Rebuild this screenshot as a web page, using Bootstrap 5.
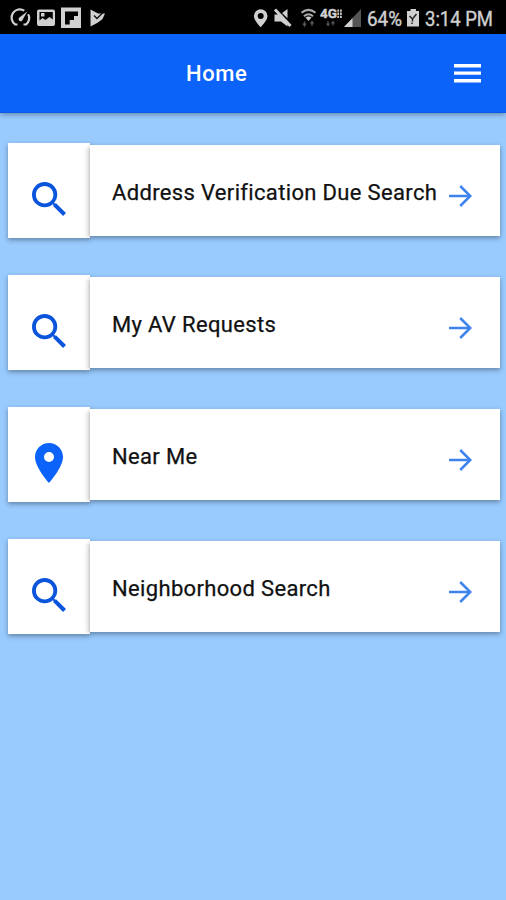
<!DOCTYPE html>
<html lang="en">
<head>
<meta charset="utf-8">
<meta name="viewport" content="width=device-width, initial-scale=1">
<title>Home</title>
<link href="https://cdn.jsdelivr.net/npm/bootstrap@5.3.0/dist/css/bootstrap.min.css" rel="stylesheet">
<style>
body{background:#99cbff;font-family:Roboto,"Liberation Sans",sans-serif;min-height:900px}
svg{display:block;flex:none;overflow:visible}
.status-bar{height:34px;background:#000;color:#d0d0d0;padding:0 11px}
.status-bar text{fill:#d0d0d0;stroke:#d0d0d0;stroke-width:.4px;font-family:Roboto,sans-serif}
.app-bar{height:79px;background:#0b63fa;border-bottom:1px solid #0a58e6;box-shadow:0 1px 6px rgba(0,0,0,.4);padding:1px 25px 0 186px}
.app-title{font-size:22px;font-weight:500;line-height:30px;letter-spacing:.55px;padding-top:1px}
.menu-list{padding:29.5px 6px 0 7.5px;gap:36px}
.menu-row{height:96px;color:#111}
.tile{width:82px;height:95px;margin-top:-1px;background:#fff;box-shadow:0 2px 5px rgba(0,0,0,.36);padding-top:18px}
.bar{height:91px;background:#fff;box-shadow:0 2px 5px rgba(0,0,0,.36);padding:6px 28px 0 22.5px}
.row-label{font-size:22px;line-height:30px;letter-spacing:.34px;font-weight:400;-webkit-text-stroke:.25px #111;margin-top:-1px}
.tile-shade{width:8px;height:88px;margin:2px 0 0 -8px;background:linear-gradient(90deg,transparent,rgba(0,0,0,.04))}
</style>
<script src="https://cdn.jsdelivr.net/npm/bootstrap@5.3.0/dist/js/bootstrap.bundle.min.js"></script>
</head>
<body>
<svg width="0" height="0" class="position-absolute" aria-hidden="true">
  <symbol id="search" viewBox="3 3 17.49 17.49"><path d="M15.5 14h-.79l-.28-.27A6.47 6.47 0 0 0 16 9.5 6.5 6.5 0 1 0 9.5 16c1.61 0 3.09-.59 4.23-1.57l.27.28v.79l5 4.99L20.49 19l-4.99-5zm-6 0C7.01 14 5 11.99 5 9.5S7.01 5 9.5 5 14 7.01 14 9.5 11.99 14 9.5 14z"/></symbol>
  <symbol id="place" viewBox="5 2 14 20"><path d="M12 2C8.13 2 5 5.13 5 9c0 5.25 7 13 7 13s7-7.75 7-13c0-3.87-3.13-7-7-7zm0 9.5a2.5 2.5 0 0 1 0-5 2.5 2.5 0 0 1 0 5z"/></symbol>
  <symbol id="arrow" viewBox="0 0 24 24"><path d="M1 12H22M12.200 2L22.300 12L12.200 22" fill="none" stroke="#3f83ee" stroke-width="2.500"/></symbol>
</svg>

<div class="status-bar d-flex align-items-start justify-content-between">
  <svg width="94" height="34" viewBox="11 0 94 34" fill="#d0d0d0">
    <path d="M17.500 24.500H15.300A8 8 0 0 1 24.300 10.700M28.200 14.200A8 8 0 0 1 26 24.500H23.500" fill="none" stroke="#d0d0d0" stroke-width="2.200"/>
    <path d="M27.300 11.500L22.200 20.400A2 2 0 1 1 19 17.800z"/>
    <path fill-rule="evenodd" d="M39 9.500H53A2 2 0 0 1 55 11.500V24A2 2 0 0 1 53 26H39A2 2 0 0 1 37 24V11.500A2 2 0 0 1 39 9.500zM39.500 12V20.500L42.500 18L45.500 20L49.500 17L52.800 19.500V12zM41 13H44.500V16.500H41z"/>
    <path fill-rule="evenodd" d="M61 7.500H81V28H61zM65 11.500V24.500H69.700V20H74V16H78V11.500z"/>
    <path d="M90.500 9.500L98 13.500H105L102.500 19L98 22.500L90.500 26.500z"/>
    <path d="M94 15.500L97 18.500L103 12.500" fill="none" stroke="#111" stroke-width="1.400"/>
  </svg>
  <svg width="242" height="34" viewBox="253 0 242 34" fill="#d0d0d0">
    <path fill-rule="evenodd" d="M260.700 9.200A6.800 6.800 0 0 0 253.900 16C253.900 20.500 260.700 27.200 260.700 27.200S267.500 20.500 267.500 16A6.800 6.800 0 0 0 260.700 9.200zM260.700 13A3 3 0 1 1 260.700 19A3 3 0 1 1 260.700 13z"/>
    <path d="M274.500 14.500H279L287.500 22V26.500L281 21.500H274.500zM281.500 13.500L287.500 9V18.500z"/>
    <path d="M275 9.500L290.500 26" stroke="#d0d0d0" stroke-width="3"/><path d="M277.500 8.800L289 20.500" stroke="#000" stroke-width="1"/>
    <path d="M301.500 12.800Q308.500 7 315.500 12.800M304 16.200Q308.500 12.300 313 16.200" fill="none" stroke="#aaa" stroke-width="2.100"/><path d="M305.500 17.500Q308.500 15.500 311.500 17.500L308.500 21z"/>
    <path d="M304.500 21.500V25M303 23.500L304.500 26L306 23.500M312 26V22M310.500 23.500L312 21.500L313.500 23.500" fill="none" stroke="#555" stroke-width="1.300"/>
    <text x="320" y="18" font-size="12" font-weight="700" textLength="17" lengthAdjust="spacingAndGlyphs">4G</text>
    <path d="M338.200 9.500V18M340.900 9.500V18" fill="none" stroke="#c4c4c4" stroke-width="1.800" stroke-dasharray="2.300 .8"/>
    <path d="M328 21V25M326.500 23.500L328 25.500L329.500 23.500M333 25.500V21.500M331.500 23.500L333 21.500L334.500 23.500" fill="none" stroke="#555" stroke-width="1.200"/>
    <path d="M361 9V27H344z" fill="#555"/><path d="M352.500 18V27H344z"/>
    <text x="367" y="26" font-size="21" textLength="35" lengthAdjust="spacingAndGlyphs">64%</text>
    <path d="M410.500 9H416V11H419V26.500H407V11H410.500z"/>
    <path d="M409.500 16L412.500 19L416.500 14M412.500 19V21.500M412 22.500V24" fill="none" stroke="#222" stroke-width="1.500"/>
    <text x="425" y="26" font-size="21" textLength="68" lengthAdjust="spacingAndGlyphs">3:14 PM</text>
  </svg>
</div>

<header class="app-bar d-flex align-items-center justify-content-between text-white">
  <h1 class="app-title mb-0">Home</h1>
  <svg width="27" height="19" viewBox="0 0 27 19" fill="#fff" role="img" aria-label="Menu"><path d="M0 0H27V3.400H0zM0 7.400H27V10.800H0zM0 15H27V18.400H0z"/></svg>
</header>

<main class="menu-list d-flex flex-column">
  <a href="#" class="menu-row d-flex align-items-center text-decoration-none">
    <span class="tile d-flex align-items-center justify-content-center"><svg width="34" height="34" fill="#0b55dc"><use href="#search"/></svg></span><span class="tile-shade"></span>
    <span class="bar d-flex flex-grow-1 align-items-center justify-content-between"><span class="row-label text-nowrap">Address Verification Due Search</span><svg class="mt-1" width="24" height="24"><use href="#arrow"/></svg></span>
  </a>
  <a href="#" class="menu-row d-flex align-items-center text-decoration-none">
    <span class="tile d-flex align-items-center justify-content-center"><svg width="34" height="34" fill="#0b55dc"><use href="#search"/></svg></span><span class="tile-shade"></span>
    <span class="bar d-flex flex-grow-1 align-items-center justify-content-between"><span class="row-label text-nowrap">My AV Requests</span><svg class="mt-1" width="24" height="24"><use href="#arrow"/></svg></span>
  </a>
  <a href="#" class="menu-row d-flex align-items-center text-decoration-none">
    <span class="tile d-flex align-items-center justify-content-center"><svg width="28" height="40" fill="#0b63fa"><use href="#place"/></svg></span><span class="tile-shade"></span>
    <span class="bar d-flex flex-grow-1 align-items-center justify-content-between"><span class="row-label text-nowrap">Near Me</span><svg class="mt-1" width="24" height="24"><use href="#arrow"/></svg></span>
  </a>
  <a href="#" class="menu-row d-flex align-items-center text-decoration-none">
    <span class="tile d-flex align-items-center justify-content-center"><svg width="34" height="34" fill="#0b55dc"><use href="#search"/></svg></span><span class="tile-shade"></span>
    <span class="bar d-flex flex-grow-1 align-items-center justify-content-between"><span class="row-label text-nowrap">Neighborhood Search</span><svg class="mt-1" width="24" height="24"><use href="#arrow"/></svg></span>
  </a>
</main>
</body>
</html>
